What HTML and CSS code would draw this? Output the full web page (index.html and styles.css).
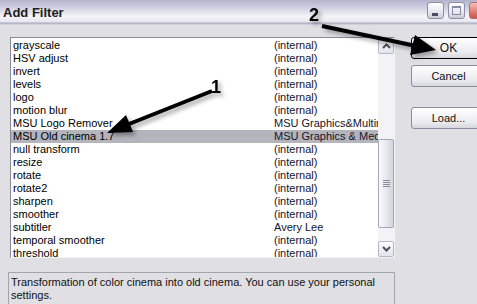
FILE: index.html
```html
<!DOCTYPE html>
<html lang="en">
<head>
    <meta charset="UTF-8">
    <meta name="viewport" content="width=device-width, initial-scale=1.0">
    <title>Add Filter</title>
    <link rel="stylesheet" href="styles.css">
</head>
<body>
    <div class="window">
        <header class="titlebar">
            <span class="title">Add Filter</span>
            <div class="controls">
                <span class="ctl ctl-min"><span class="min-bar"></span></span>
                <span class="ctl ctl-max"><span class="max-box"></span></span>
                <span class="ctl ctl-close"></span>
            </div>
        </header>

        <main class="content">
            <div class="left">
                <div class="listbox">
                    <ul class="rows">
                        <li class="row"><span class="name">grayscale</span><span class="author">(internal)</span></li>
                        <li class="row"><span class="name">HSV adjust</span><span class="author">(internal)</span></li>
                        <li class="row"><span class="name">invert</span><span class="author">(internal)</span></li>
                        <li class="row"><span class="name">levels</span><span class="author">(internal)</span></li>
                        <li class="row"><span class="name">logo</span><span class="author">(internal)</span></li>
                        <li class="row"><span class="name">motion blur</span><span class="author">(internal)</span></li>
                        <li class="row"><span class="name">MSU Logo Remover</span><span class="author">MSU Graphics&amp;Multimedia Lab</span></li>
                        <li class="row selected"><span class="name">MSU Old cinema 1.7</span><span class="author">MSU Graphics &amp; Media Lab</span></li>
                        <li class="row"><span class="name">null transform</span><span class="author">(internal)</span></li>
                        <li class="row"><span class="name">resize</span><span class="author">(internal)</span></li>
                        <li class="row"><span class="name">rotate</span><span class="author">(internal)</span></li>
                        <li class="row"><span class="name">rotate2</span><span class="author">(internal)</span></li>
                        <li class="row"><span class="name">sharpen</span><span class="author">(internal)</span></li>
                        <li class="row"><span class="name">smoother</span><span class="author">(internal)</span></li>
                        <li class="row"><span class="name">subtitler</span><span class="author">Avery Lee</span></li>
                        <li class="row"><span class="name">temporal smoother</span><span class="author">(internal)</span></li>
                        <li class="row"><span class="name">threshold</span><span class="author">(internal)</span></li>
                    </ul>
                    <div class="scrollbar">
                        <span class="sb-btn">
                            <svg width="9" height="6" viewBox="0 0 9 6"><polyline points="1,5 4.5,1.5 8,5" fill="none" stroke="#4d4d5c" stroke-width="2"/></svg>
                        </span>
                        <span class="sb-thumb">
                            <span class="grip"></span>
                        </span>
                        <span class="sb-spacer"></span>
                        <span class="sb-btn">
                            <svg width="9" height="6" viewBox="0 0 9 6"><polyline points="1,1 4.5,4.5 8,1" fill="none" stroke="#4d4d5c" stroke-width="2"/></svg>
                        </span>
                    </div>
                </div>

                <div class="description">
                    Transformation of color cinema into old cinema. You can use your personal settings.
                </div>
            </div>

            <div class="buttons">
                <button class="btn btn-default">OK</button>
                <button class="btn">Cancel</button>
                <button class="btn btn-load">Load...</button>
            </div>
        </main>

        <!-- callout arrows drawn over the dialog -->
        <svg class="annotations" width="477" height="304" viewBox="0 0 477 304">
            <defs>
                <filter id="shadow" x="-20%" y="-50%" width="140%" height="200%">
                    <feDropShadow dx="3" dy="3" stdDeviation="2" flood-color="#000" flood-opacity="0.35"/>
                </filter>
            </defs>
            <g filter="url(#shadow)">
                <line x1="212" y1="91" x2="124" y2="126" stroke="#000" stroke-width="4"/>
                <polygon points="107,133 133,132 126,115" fill="#000"/>
                <line x1="322" y1="26" x2="416" y2="46" stroke="#000" stroke-width="4"/>
                <polygon points="436,50 410,55 415,35" fill="#000"/>
                <text x="211" y="93" class="callout">1</text>
                <text x="309" y="21" class="callout">2</text>
            </g>
        </svg>
    </div>
</body>
</html>
```

FILE: styles.css
```css
* {
    margin: 0;
    padding: 0;
    box-sizing: border-box;
}

body {
    width: 477px;
    height: 304px;
    overflow: hidden;
    background: #e0dfe3;
    font-family: 'Liberation Sans', Arial, sans-serif;
    font-size: 11px;
    color: #000;
}

.window {
    position: relative;
    width: 477px;
    height: 304px;
    overflow: hidden;
}

/* title bar */

.titlebar {
    height: 25px;
    display: flex;
    align-items: flex-start;
    justify-content: space-between;
    background: linear-gradient(#b3b3cd 0%, #cacadf 25%, #f4f4f8 65%, #e6e6ee 88%, #a9a9bd 92%, #dcdce4 100%);
}

.title {
    font-weight: 700;
    font-size: 13px;
    color: #202020;
    padding: 5px 0 0 3px;
}

.controls {
    display: flex;
    gap: 4px;
    padding-top: 2px;
    margin-right: -9px;
}

.ctl {
    width: 17px;
    height: 17px;
    border: 1px solid #8e8ea8;
    border-radius: 3px;
    background: linear-gradient(#ffffff, #e2e2ec 70%, #c8c8d8);
    position: relative;
    display: flex;
}

.min-bar {
    width: 6px;
    height: 3px;
    background: #4a4a66;
    margin: 10px 0 0 4px;
}

.max-box {
    width: 9px;
    height: 9px;
    border: 1px solid #8a8aa0;
    border-top-width: 2px;
    margin: 3px 0 0 3px;
}

.ctl-close {
    background: linear-gradient(#f4c0b8, #e07a6a 60%, #c85848);
    border-color: #a87070;
}

/* body */

.content {
    display: flex;
    padding: 12px 0 0 10px;
}

.left {
    width: 385px;
}

.listbox {
    display: flex;
    height: 221px;
    background: #fff;
    border: 1px solid;
    border-color: #8a8a92 #f2f2f2 #f2f2f2 #8a8a92;
}

.rows {
    list-style: none;
    width: 367px;
    overflow: hidden;
    padding-top: 1px;
}

.row {
    display: grid;
    grid-template-columns: 261px 1fr;
    height: 13px;
    line-height: 13px;
    padding-left: 2px;
    white-space: nowrap;
    overflow: hidden;
}

.row .author {
    color: #14142a;
    overflow: hidden;
}

.row.selected {
    background: #b4b4bc;
}

/* scrollbar */

.scrollbar {
    width: 16px;
    display: flex;
    flex-direction: column;
    background: #f3f3f6;
}

.sb-btn {
    height: 16px;
    display: flex;
    align-items: center;
    justify-content: center;
    border: 1px solid #b6b6c6;
    border-radius: 2px;
    background: linear-gradient(#fcfcfd, #e4e4ec);
}

.sb-thumb {
    height: 89px;
    margin-top: 85px;
    display: flex;
    align-items: center;
    justify-content: center;
    border: 1px solid #a6a6b8;
    border-radius: 2px;
    background: linear-gradient(90deg, #fafafc, #e4e4ec 60%, #d4d4de);
}

.grip {
    width: 7px;
    height: 7px;
    background: repeating-linear-gradient(#8c8c9c 0 1px, transparent 1px 2px);
}

.sb-spacer {
    flex: 1;
}

.description {
    margin: 14px 0 0 -2px;
    width: 387px;
    height: 40px;
    border: 1px solid #a4a4ac;
    padding: 3px 0 0 2px;
    line-height: 13px;
    color: #101010;
}

/* buttons */

.buttons {
    display: flex;
    flex-direction: column;
    margin-left: 16px;
}

.btn {
    width: 75px;
    height: 22px;
    font-family: inherit;
    font-size: 11px;
    color: #101010;
    border: 1px solid #8c8c9c;
    border-radius: 3px;
    background: linear-gradient(#ffffff, #ececf0 70%, #d6d6de);
    margin-bottom: 6px;
}

.btn-default {
    border-color: #000;
    font-size: 12px;
}

.btn-load {
    margin-top: 14px;
}

/* callouts */

.annotations {
    position: absolute;
    top: 0;
    left: 0;
}

.callout {
    font-family: 'Liberation Sans', Arial, sans-serif;
    font-weight: 700;
    font-size: 18px;
    fill: #000;
}
```
